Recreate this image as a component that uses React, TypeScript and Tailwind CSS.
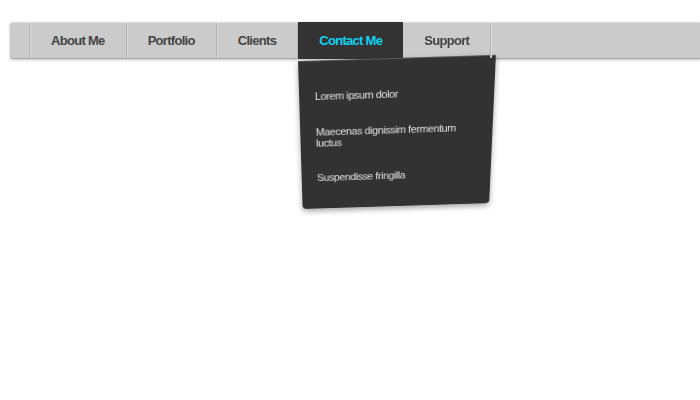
import React from "react";

const items = ["About Me", "Portfolio", "Clients", "Contact Me", "Support"];

export default function App() {
  return (
    <div className="w-[700px] h-[400px] bg-white overflow-hidden" style={{ fontFamily: '"Liberation Sans", Arial, sans-serif' }}>
      <div className="pt-[22px] pl-[10px]">
        <nav className="relative h-[37px] bg-[#cbcbcb] rounded-l-[3px] border-t border-t-[#dedede] border-b border-b-[#a9a9a9] shadow-[0_1px_3px_rgba(0,0,0,0.25)]">
          <ul className="flex h-full">
            <li className="w-[20px] h-full border-r border-r-[#b3b3b3] shadow-[1px_0_0_#dadada]" />
            {items.map((it) => {
              const active = it === "Contact Me";
              return (
                <li
                  key={it}
                  className={
                    active
                      ? "relative h-[37px] -mt-px bg-[#333333]"
                      : "relative h-full border-r border-r-[#b3b3b3] shadow-[1px_0_0_#dadada]"
                  }
                >
                  <a
                    className={
                      "flex items-center h-full px-[21px] text-[13px] font-bold tracking-[-0.7px] " +
                      (active ? "text-[#10d3f2]" : "text-[#444444]")
                    }
                  >
                    {it}
                  </a>
                  {active && (
                    <div className="absolute left-0 top-[39px] w-[198px] origin-top-left [transform:perspective(500px)_rotate(-1.8deg)_rotateX(-11deg)] bg-[#323232] rounded-b-[4px] shadow-[0_3px_6px_rgba(0,0,0,0.35)] pt-[17px] pb-[16px] border-t border-t-[#5a5a5a]">
                      {["Lorem ipsum dolor", "Maecenas dignissim fermentum luctus", "Suspendisse fringilla"].map((s) => (
                        <div key={s} className="px-4 py-[13px] pr-6 text-[11px] leading-[12px] tracking-[-0.4px] text-[#e2e2e2]">
                          {s}
                        </div>
                      ))}
                    </div>
                  )}
                </li>
              );
            })}
          </ul>
        </nav>
      </div>
    </div>
  );
}
